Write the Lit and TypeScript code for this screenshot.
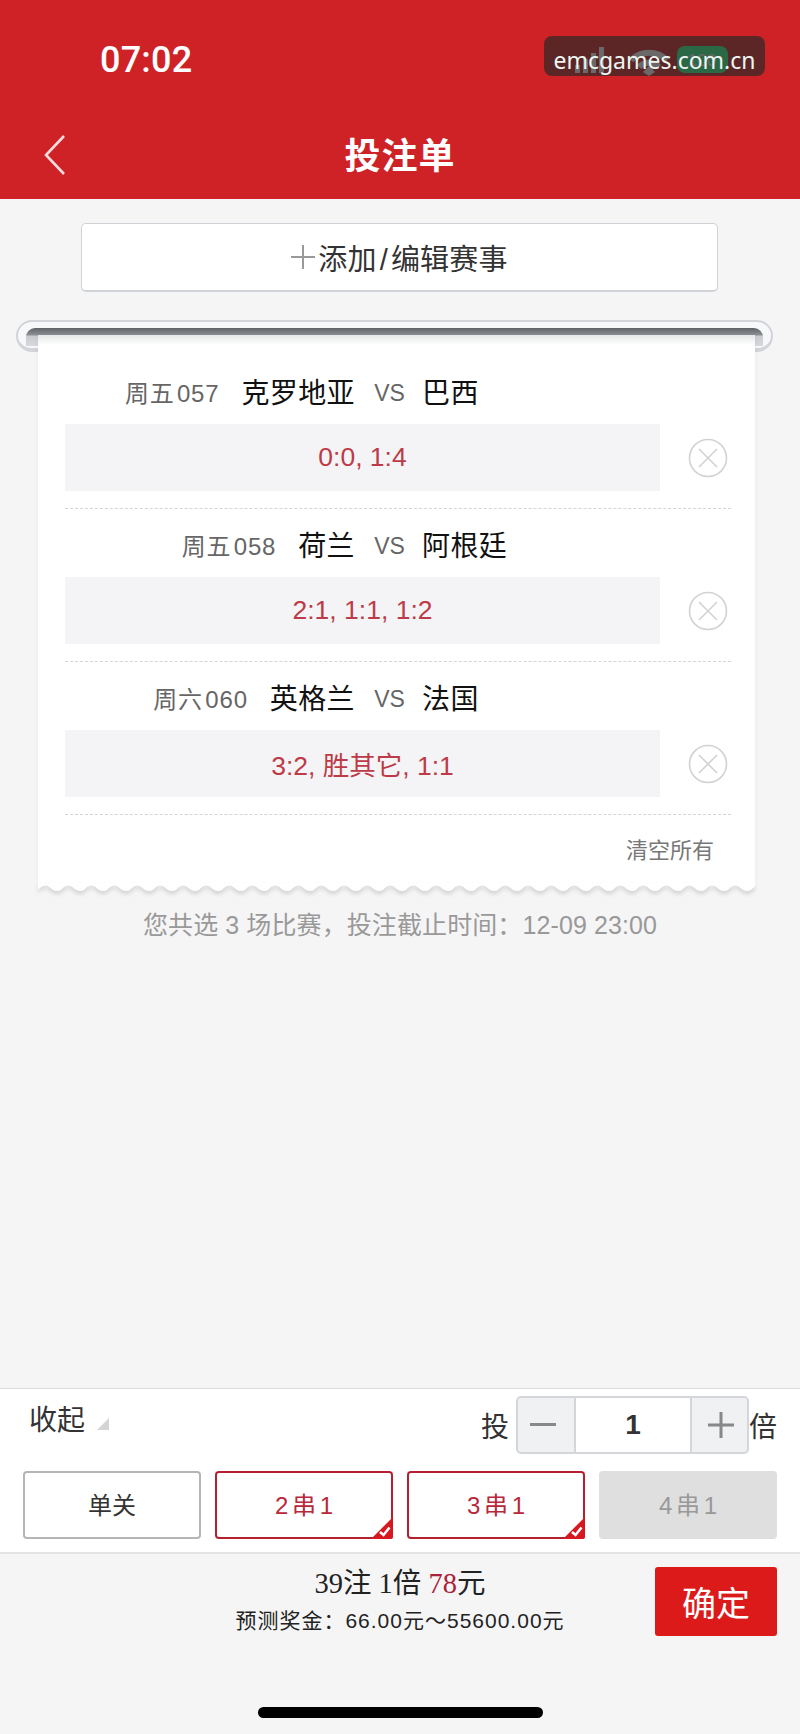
import { html, css, LitElement, svg } from 'lit';
import { customElement } from 'lit/decorators.js';

const MATCHES = [
  { tag: '周五 057', home: '克罗地亚', away: '巴西', picks: '0:0, 1:4' },
  { tag: '周五 058', home: '荷兰', away: '阿根廷', picks: '2:1, 1:1, 1:2' },
  { tag: '周六 060', home: '英格兰', away: '法国', picks: '3:2, 胜其它, 1:1' },
];

const PASSES = [
  { label: '单关', state: '' },
  { label: '2 串 1', state: 'on' },
  { label: '3 串 1', state: 'on' },
  { label: '4 串 1', state: 'off' },
];

// scalloped lower edge of the ticket
const wavePath = () => {
  let d = 'M0 0 V7';
  for (let x = 0; x < 717; x += 23) d += ` q5.75 -7 11.5 -3 q5.75 6 11.5 3`;
  return d + ' V0 Z';
};

@customElement('app-root')
export class AppRoot extends LitElement {
  static override styles = css`
    :host {
      display: flex;
      flex-direction: column;
      width: 800px;
      height: 1734px;
      background: #f5f5f6;
      color: #222;
      font-family: 'Liberation Sans', 'Noto Sans CJK SC', sans-serif;
      position: relative;
      overflow: hidden;
    }
    .header {
      height: 199px;
      flex: none;
      background: #cf2227;
      color: #fff;
      position: relative;
    }
    .status {
      height: 118px;
      display: flex;
      align-items: center;
      justify-content: space-between;
      padding: 2px 70px 0 100px;
      box-sizing: border-box;
    }
    .time {
      font-family: Roboto, sans-serif;
      font-weight: 500;
      font-size: 36px;
      letter-spacing: 0.2px;
    }
    .status-icons {
      display: block;
      margin-top: 3px;
    }
    .watermark {
      position: absolute;
      left: 544px;
      top: 36px;
      width: 221px;
      height: 40px;
      border-radius: 8px;
      background: rgba(43, 40, 40, 0.7);
      color: #eef6f2;
      font-family: 'Noto Sans', sans-serif;
      font-size: 23px;
      line-height: 48px;
      text-align: center;
      white-space: nowrap;
    }
    .nav {
      height: 70px;
      display: grid;
      align-items: center;
    }
    .nav > * {
      grid-area: 1 / 1;
    }
    .back {
      margin: 3px 0 0 43px;
      display: block;
    }
    .title {
      justify-self: center;
      font-size: 36px;
      font-weight: 700;
      letter-spacing: 1px;
    }
    .add {
      flex: none;
      box-sizing: border-box;
      width: 637px;
      height: 69px;
      margin: 24px 0 0 81px;
      background: #fff;
      border: 1px solid #cfd2d6;
      border-bottom: 2px solid #cfd2d6;
      border-radius: 5px;
      display: flex;
      align-items: center;
      justify-content: center;
      gap: 3px;
      font-size: 29px;
      letter-spacing: 0.2px;
      color: #333;
    }
    .add svg {
      display: block;
    }
    .add i {
      font-style: normal;
      margin: 0 3px;
    }
    .ticket {
      flex: none;
      margin: 28px 27px 0 16px;
    }
    .roller {
      box-sizing: border-box;
      height: 32px;
      border: 2px solid #d2d4da;
      border-bottom-width: 4px;
      border-radius: 16px;
      background: #f7f8f9;
      padding: 6px 8px 0;
    }
    .roller-bar {
      height: 18px;
      border-radius: 9px 9px 0 0;
      background: linear-gradient(#5f6367, #8d9094 7px, #c9cbce 8px, #d8d9dc);
    }
    .paper {
      position: relative;
      margin: -17px 18px 0 22px;
      padding: 21px 17px 0 27px;
      background: linear-gradient(#e6e7e8, #fff 10px);
      height: 548px;
      box-sizing: border-box;
      box-shadow: 0 0 6px rgba(0, 0, 0, 0.05);
    }
    .match {
      width: 666px;
      padding: 17px 0;
      border-bottom: 1px dashed #d5d5d7;
    }
    .match-head {
      display: grid;
      grid-template-columns: 290px 31px 1fr;
      grid-template-rows: 36px;
      column-gap: 19px;
      margin-bottom: 15px;
      align-items: center;
    }
    .left {
      display: flex;
      justify-content: flex-end;
      align-items: center;
      gap: 22px;
    }
    .tag {
      font-size: 24px;
      color: #666;
      word-spacing: -5px;
      letter-spacing: 0.8px;
    }
    .team {
      font-size: 28px;
      letter-spacing: 0.4px;
      color: #111;
    }
    .vs {
      font-size: 23px;
      color: #666;
      text-align: center;
      margin-top: 4px;
    }
    .away {
      margin-left: -2px;
    }
    .match-body {
      display: flex;
      align-items: center;
    }
    .picks {
      box-sizing: border-box;
      width: 595px;
      height: 67px;
      padding-bottom: 1px;
      background: #f4f4f6;
      color: #bd3b48;
      font-size: 26.5px;
      display: flex;
      align-items: center;
      justify-content: center;
    }
    .close {
      display: block;
      margin-left: 28px;
    }
    .clear {
      text-align: right;
      font-size: 22px;
      color: #777;
      margin: 21px 24px 0 0;
      line-height: 30px;
    }
    .wave {
      display: block;
      position: absolute;
      left: 0;
      top: 548px;
      filter: drop-shadow(0 3px 2px rgba(0, 0, 0, 0.14));
    }
    .info {
      flex: none;
      margin-top: 25px;
      height: 34px;
      line-height: 34px;
      text-align: center;
      font-size: 25px;
      letter-spacing: 0.1px;
      color: #999;
    }
    .panel {
      flex: none;
      margin-top: auto;
      box-sizing: border-box;
      height: 166px;
      background: #fff;
      border-top: 1px solid #dcdce0;
      border-bottom: 2px solid #e4e4e6;
      padding: 7px 23px 0;
    }
    .panel-top {
      display: flex;
      height: 58px;
      align-items: flex-start;
    }
    .fold {
      display: flex;
      align-items: center;
      gap: 12px;
      margin: 3px 0 0 6px;
      font-size: 28px;
      line-height: 44px;
      color: #333;
    }
    .fold svg {
      display: block;
      margin-top: 6px;
    }
    .stake {
      margin-left: auto;
      display: flex;
      align-items: center;
      height: 58px;
      font-size: 28px;
      color: #333;
    }
    .stepper {
      box-sizing: border-box;
      width: 233px;
      height: 58px;
      margin: 0 0 0 7px;
      display: grid;
      grid-template-columns: 56px 1fr 55px;
      border: 2px solid #d4d6d9;
      border-radius: 5px;
      background: #f0f1f3;
    }
    .stepper svg {
      display: block;
      margin: auto auto auto 12px;
    }
    .stepper .plus svg {
      margin-left: 16px;
    }
    .step {
      display: flex;
    }
    .qty {
      background: #fff;
      border-left: 2px solid #d4d6d9;
      border-right: 2px solid #d4d6d9;
      display: flex;
      align-items: center;
      justify-content: center;
      font-weight: 700;
      font-size: 28px;
      color: #333;
    }
    .passes {
      display: grid;
      grid-template-columns: repeat(4, 178px);
      column-gap: 14px;
      margin-top: 17px;
    }
    .pass {
      position: relative;
      box-sizing: border-box;
      height: 68px;
      padding-bottom: 3px;
      border: 2px solid #b5b5b5;
      border-radius: 4px;
      background: #fff;
      display: flex;
      align-items: center;
      justify-content: center;
      font-size: 24px;
      color: #333;
      word-spacing: -3px;
    }
    .pass.on {
      border-color: #b5202c;
      color: #b8273a;
    }
    .pass.off {
      border-color: #dfdfdf;
      background: #dfdfdf;
      color: #999;
    }
    .corner {
      position: absolute;
      right: -2px;
      bottom: -2px;
      display: block;
    }
    .footer {
      flex: none;
      height: 180px;
      display: flex;
      flex-direction: column;
    }
    .footer-top {
      display: grid;
      padding-top: 13px;
    }
    .footer-top > * {
      grid-area: 1 / 1;
    }
    .summary {
      justify-self: center;
      text-align: center;
      color: #222;
    }
    .total {
      font-family: 'Liberation Serif', 'Noto Sans CJK SC', serif;
      font-size: 28.5px;
      line-height: 36px;
      margin-top: -1px;
    }
    .total em {
      font-style: normal;
      color: #ab2138;
    }
    .prize {
      font-size: 21px;
      line-height: 30px;
      margin-top: 4px;
      letter-spacing: 1px;
    }
    .confirm {
      justify-self: end;
      margin-right: 23px;
      width: 122px;
      height: 69px;
      border-radius: 3px;
      background: #dd1a1a;
      color: #fff;
      font-size: 34px;
      display: flex;
      align-items: center;
      justify-content: center;
    }
    .home-bar {
      width: 285px;
      height: 11px;
      border-radius: 6px;
      background: #000;
      margin: 71px 0 0 258px;
    }
  `;

  renderMatch(m: (typeof MATCHES)[number]) {
    return html`
      <div class="match">
        <div class="match-head">
          <div class="left">
            <span class="tag">${m.tag}</span>
            <span class="team">${m.home}</span>
          </div>
          <span class="vs">VS</span>
          <span class="team away">${m.away}</span>
        </div>
        <div class="match-body">
          <div class="picks">${m.picks}</div>
          <svg class="close" width="40" height="40" viewBox="0 0 40 40" fill="none" stroke="#d2d2d4" stroke-width="1.6">
            <circle cx="20" cy="20" r="18.5" />
            <path d="M11 11 L29 29 M29 11 L11 29" />
          </svg>
        </div>
      </div>
    `;
  }

  override render() {
    return html`
      <div class="header">
        <div class="status">
          <span class="time">07:02</span>
          <svg class="status-icons" width="155" height="34" viewBox="0 0 155 34">
            <g fill="#fff">
              <rect x="0" y="20" width="5" height="8" />
              <rect x="8" y="14" width="5" height="14" />
              <rect x="16" y="8" width="5" height="20" />
              <rect x="24" y="2" width="5" height="26" />
            </g>
            <path d="M56 15 a26 26 0 0 1 36 0 M64 22 a14 14 0 0 1 20 0" fill="none" stroke="#fff" stroke-width="6" />
            <path d="M68 27 L74 21 L80 27 L74 31 Z" fill="#fff" />
            <rect x="102" y="1" width="51" height="27" rx="8" fill="#2eff8c" />
            <text x="127" y="21" text-anchor="middle" font-size="17" fill="#ffffff" font-family="Liberation Sans">100</text>
          </svg>
        </div>
        <div class="nav">
          <svg class="back" width="24" height="40" viewBox="0 0 24 40" fill="none" stroke="#f6dcdc" stroke-width="2.6">
            <path d="M21 1 L3 20 L21 39" />
          </svg>
          <div class="title">投注单</div>
        </div>
        <div class="watermark">emcgames.com.cn</div>
      </div>

      <div class="add">
        <svg width="24" height="24" viewBox="0 0 24 24" stroke="#999" stroke-width="2">
          <path d="M12 0 V24 M0 12 H24" />
        </svg>
        <span>添加<i>/</i>编辑赛事</span>
      </div>

      <div class="ticket">
        <div class="roller"><div class="roller-bar"></div></div>
        <div class="paper">
          ${MATCHES.map((m) => this.renderMatch(m))}
          <div class="clear">清空所有</div>
          <svg class="wave" width="717" height="12" viewBox="0 0 717 12">
            ${svg`<path d=${wavePath()} fill="#fff" />`}
          </svg>
        </div>
      </div>

      <div class="info">您共选 3 场比赛，投注截止时间：12-09 23:00</div>

      <div class="panel">
        <div class="panel-top">
          <div class="fold">
            <span>收起</span>
            <svg width="12" height="12" viewBox="0 0 12 12"><path d="M12 0 V12 H0 Z" fill="#d4d4d6" /></svg>
          </div>
          <div class="stake">
            <span>投</span>
            <div class="stepper">
              <div class="step">
                <svg width="26" height="4" viewBox="0 0 26 4"><rect width="26" height="3" fill="#888" /></svg>
              </div>
              <div class="qty">1</div>
              <div class="step plus">
                <svg width="26" height="26" viewBox="0 0 26 26" stroke="#888" stroke-width="3">
                  <path d="M13 0 V26 M0 13 H26" />
                </svg>
              </div>
            </div>
            <span>倍</span>
          </div>
        </div>
        <div class="passes">
          ${PASSES.map(
            (p) => html`
              <div class="pass ${p.state}">
                ${p.label}
                ${p.state === 'on'
                  ? html`<svg class="corner" width="22" height="22" viewBox="0 0 22 22">
                      <path d="M22 0 V20 Q22 22 20 22 H0 Z" fill="#d81820" />
                      <path d="M9 15 L12.5 18 L18.5 10.5" fill="none" stroke="#fff" stroke-width="2.6" />
                    </svg>`
                  : ''}
              </div>
            `,
          )}
        </div>
      </div>

      <div class="footer">
        <div class="footer-top">
          <div class="summary">
            <div class="total">39注 1倍 <em>78</em>元</div>
            <div class="prize">预测奖金：66.00元～55600.00元</div>
          </div>
          <div class="confirm">确定</div>
        </div>
        <div class="home-bar"></div>
      </div>
    `;
  }
}

declare global {
  interface HTMLElementTagNameMap {
    'app-root': AppRoot;
  }
}
